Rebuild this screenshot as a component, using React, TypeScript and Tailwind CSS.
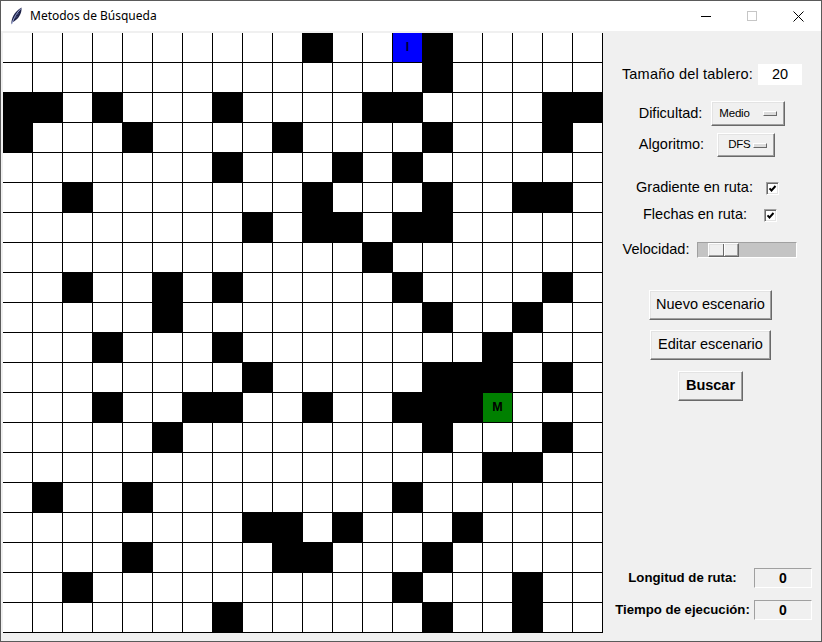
import React from "react";

const board = [
  "..........#..I#.....",
  "..............#.....",
  "##.#...#....##....##",
  "#...#....#....#...#.",
  ".......#...#.#......",
  "..#.......#...#..##.",
  "........#.##.##.....",
  "............#.......",
  "..#..#.#.....#....#.",
  ".....#........#..#..",
  "...#...#........#...",
  "........#.....###.#.",
  "...#..##..#..###M...",
  ".....#........#...#.",
  "................##..",
  ".#..#........#......",
  "........##.#...#....",
  "....#....##...#.....",
  "..#..........#...#..",
  ".......#......#..#..",
];

const raised =
  "border border-t-white border-l-white border-b-[#696969] border-r-[#696969] shadow-[inset_-1px_-1px_0_#a0a0a0,inset_1px_1px_0_#e3e3e3]";
const sunken =
  "border border-t-[#a0a0a0] border-l-[#a0a0a0] border-b-white border-r-white";

function TitleBar() {
  return (
    <div className="h-[30px] bg-white flex items-center shrink-0">
      <svg width="14" height="18" viewBox="0 0 14 18" className="ml-[8px]">
        <path d="M2.5 17.5 C2 11.5 5 5 12.5 0.5 C13 6.5 9.5 12.5 3.6 15.2 Z" fill="#1e2247" />
        <path d="M2.8 17 C4.5 11.5 7.5 6 12 1.5" stroke="#aab6e6" strokeWidth="0.9" fill="none" />
        <path d="M5 11 L8.5 9.5 M6.5 8 L10 6.5" stroke="#5a6496" strokeWidth="0.6" />
      </svg>
      <span className="ml-[7px] text-[12px] text-black font-['Segoe_UI','Noto_Sans',sans-serif]">
        Metodos de Búsqueda
      </span>
      <div className="ml-auto flex h-full">
        <div className="w-[46px] h-full flex items-center justify-center">
          <svg width="10" height="10" viewBox="0 0 10 10">
            <path d="M0 5.5 H10" stroke="#000" strokeWidth="1" />
          </svg>
        </div>
        <div className="w-[46px] h-full flex items-center justify-center">
          <svg width="10" height="10" viewBox="0 0 10 10">
            <rect x="0.5" y="0.5" width="9" height="9" stroke="#c6c6c6" fill="none" />
          </svg>
        </div>
        <div className="w-[46px] h-full flex items-center justify-center">
          <svg width="11" height="11" viewBox="0 0 11 11">
            <path d="M0.5 0.5 L10.5 10.5 M10.5 0.5 L0.5 10.5" stroke="#000" strokeWidth="1" />
          </svg>
        </div>
      </div>
    </div>
  );
}

function Board() {
  return (
    <div className="p-[2px] shrink-0">
      <div className="grid grid-cols-[repeat(20,30px)] grid-rows-[repeat(20,30px)] bg-white">
        {board.flatMap((row, r) =>
          row.split("").map((c, i) => (
            <div
              key={`${r}-${i}`}
              className={`border-r border-b border-black flex items-center justify-center text-[12.5px] font-bold ${
                c === "#"
                  ? "bg-black"
                  : c === "I"
                  ? "bg-[#0000ff] text-[#000033]"
                  : c === "M"
                  ? "bg-[#008000] text-black"
                  : "bg-white"
              }`}
            >
              {c === "I" || c === "M" ? c : null}
            </div>
          ))
        )}
      </div>
    </div>
  );
}

function OptionButton({ label, width }: { label: string; width: string }) {
  return (
    <div className={`flex items-center justify-between bg-[#f0f0f0] pl-[7px] pr-[7px] ${width} ${raised}`}>
      <span className="text-[11.5px] tracking-[-0.2px]">{label}</span>
      <span className="w-[14px] h-[5px] bg-[#dcdcdc] border border-t-white border-l-white border-b-[#696969] border-r-[#696969]" />
    </div>
  );
}

function Check() {
  return (
    <div
      className={`w-[13px] h-[13px] bg-white flex items-center justify-center ${sunken} shadow-[inset_1px_1px_0_#696969,inset_-1px_-1px_0_#e3e3e3]`}
    >
      <svg width="9" height="9" viewBox="0 0 9 9">
        <polyline points="1.5,4.3 3.5,6.5 7.5,2" stroke="#000" strokeWidth="1.9" fill="none" />
      </svg>
    </div>
  );
}

function PanelButton({ children, className }: { children: React.ReactNode; className: string }) {
  return (
    <div className={`flex items-center justify-center bg-[#f0f0f0] h-[30px] ${raised} ${className}`}>
      {children}
    </div>
  );
}

function Panel() {
  return (
    <div className="flex-1 flex flex-col items-center text-[14.5px] text-black">
      <div className="mt-[33px] h-[21px] flex items-center gap-[5px] mr-[2px]">
        <span className="tracking-[0.2px]">Tamaño del tablero:</span>
        <div className="w-[44px] h-[21px] bg-white flex items-center justify-center">20</div>
      </div>

      <div className="mt-[16px] h-[25px] flex items-center gap-[9px] mr-[2px]">
        <span>Dificultad:</span>
        <OptionButton label="Medio" width="w-[74px] h-[25px]" />
      </div>

      <div className="mt-[7px] h-[24px] flex items-center gap-[13px] mr-[12px]">
        <span>Algoritmo:</span>
        <OptionButton label="DFS" width="w-[58px] h-[24px] pl-[10px]" />
      </div>

      <div className="mt-[21px] h-[20px] flex items-center gap-[13px] mr-[11px]">
        <span>Gradiente en ruta:</span>
        <Check />
      </div>

      <div className="mt-[7px] h-[20px] flex items-center gap-[17px] mr-[6px]">
        <span>Flechas en ruta:</span>
        <Check />
      </div>

      <div className="mt-[17px] h-[16px] flex items-center gap-[8px] mr-[6px]">
        <span>Velocidad:</span>
        <div className={`w-[100px] h-[16px] bg-[#c4c4c4] flex items-center pl-[10px] ${sunken}`}>
          <div className={`w-[31px] h-[14px] flex bg-[#f0f0f0] ${raised}`}>
            <div className="flex-1" />
            <div className="w-px bg-[#696969]" />
            <div className="w-px bg-white" />
            <div className="flex-1" />
          </div>
        </div>
      </div>

      <PanelButton className="mt-[32px] w-[123px] mr-[5px]">Nuevo escenario</PanelButton>
      <PanelButton className="mt-[10px] w-[121px] mr-[5px]">Editar escenario</PanelButton>
      <PanelButton className="mt-[11px] w-[65px] mr-[5px] font-bold">Buscar</PanelButton>

      <div className="mt-auto mb-[21px] grid grid-cols-[143px_58px] gap-y-[12px] items-center mr-[3px]">
        <span className="text-center font-bold text-[13.2px]">Longitud de ruta:</span>
        <div className={`h-[20px] flex items-center justify-center font-bold text-[14px] ${sunken}`}>0</div>
        <span className="text-center font-bold text-[13.2px]">Tiempo de ejecución:</span>
        <div className={`h-[20px] flex items-center justify-center font-bold text-[14px] ${sunken}`}>0</div>
      </div>
    </div>
  );
}

export default function App() {
  return (
    <div className="w-[822px] h-[642px] flex flex-col bg-[#f0f0f0] border border-[#5a5a5a] overflow-hidden font-['Liberation_Sans',Arial,sans-serif]">
      <TitleBar />
      <div className="flex flex-1 min-h-0">
        <Board />
        <Panel />
      </div>
    </div>
  );
}
